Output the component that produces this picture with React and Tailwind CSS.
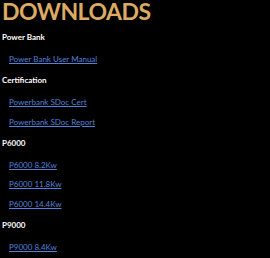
import React from 'react';

const sections = [
  { title: 'Power Bank', links: ['Power Bank User Manual'] },
  { title: 'Certification', links: ['Powerbank SDoc Cert', 'Powerbank SDoc Report'] },
  { title: 'P6000', links: ['P6000 8.2Kw', 'P6000 11.8Kw', 'P6000 14.4Kw'] },
  { title: 'P9000', links: ['P9000 8.4Kw'] },
];

export default function App() {
  return (
    <div className="w-[270px] h-[258px] overflow-hidden bg-black px-[2px] font-['Lato',sans-serif]">
      <h1 className="text-[23px] leading-[26px] font-bold tracking-[-0.5px] text-[#dcab63] -mt-[2px] mb-[1px]">DOWNLOADS</h1>
      {sections.map((s) => (
        <div key={s.title}>
          <div className="mt-[6px] text-[8px] leading-[14px] font-bold text-white">{s.title}</div>
          <div className="flex flex-col gap-[5.5px] mt-[8px] pl-[7px] pb-[1px]">
            {s.links.map((l) => (
              <a key={l} href="#" className="text-[8px] leading-[14px] text-[#5282d8] underline">{l}</a>
            ))}
          </div>
        </div>
      ))}
    </div>
  );
}
